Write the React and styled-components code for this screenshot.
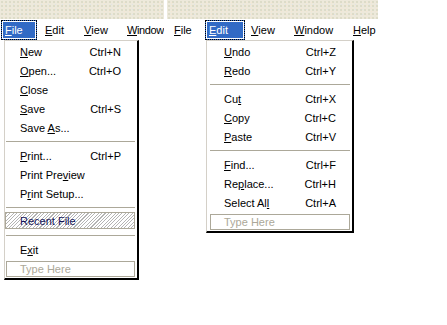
import styled, { createGlobalStyle } from 'styled-components';

const GlobalStyle = createGlobalStyle`
	html, body {
		margin: 0;
		padding: 0;
		background: #ffffff;
	}
	body {
		font-family: 'Liberation Sans', Arial, sans-serif;
		font-size: 11px;
		color: #000000;
	}
`;

const Page = styled.div`
	display: flex;
	gap: 3px;
	width: 447px;
	height: 325px;
	overflow: hidden;
	background: #ffffff;
`;

const Shot = styled.div`
	display: flex;
	flex-direction: column;
	flex: 0 0 auto;
	width: ${(p) => p.width}px;
	overflow: hidden;
`;

// textured XP desktop strip above the form
const Desktop = styled.div`
	height: 19px;
	background-color: #ede9db;
	background-image: radial-gradient(circle, #dcdcc8 0.7px, transparent 1px),
		radial-gradient(circle, #f5e6d2 0.7px, transparent 1px),
		radial-gradient(circle, #e0e4e6 0.6px, transparent 1px);
	background-size: 4px 4px, 5px 3px, 7px 5px;
	background-position: 0 0, 2px 1px, 3px 2px;
`;

const MenuBar = styled.div`
	display: flex;
	height: 21px;
	padding: 1px 0 0 1px;
	box-sizing: border-box;
	background: #ffffff;
	white-space: nowrap;
`;

const BarSlot = styled.div`
	flex: 0 0 auto;
	width: ${(p) => p.width}px;
	display: flex;
`;

const BarLabel = styled.div`
	display: flex;
	align-items: center;
	box-sizing: border-box;
	height: 20px;
	padding-left: ${(p) => (p.active ? 3 : p.pad)}px;
	width: ${(p) => (p.active ? `${p.boxWidth}px` : 'auto')};
	letter-spacing: ${(p) => (p.tight ? '-0.4px' : 'normal')};
	border: ${(p) => (p.active ? '1px dotted #000000' : 'none')};
	box-shadow: ${(p) => (p.active ? 'inset 0 0 0 1px #ffffff' : 'none')};
	background: ${(p) => (p.active ? '#316ac5' : 'transparent')};
	color: ${(p) => (p.active ? '#ffffff' : '#000000')};
`;

const Dropdown = styled.div`
	margin-left: ${(p) => p.offset}px;
	width: ${(p) => p.width}px;
	box-sizing: border-box;
	padding-top: 1px;
	background: #ffffff;
	border-top: 1px solid #d4d0c8;
	border-left: 1px solid #d4d0c8;
	border-right: 2px solid #000000;
	border-bottom: 2px solid #000000;
`;

const Item = styled.div`
	display: flex;
	align-items: center;
	justify-content: space-between;
	height: 19px;
	padding: 0 16px 0 ${(p) => p.indent}px;
	white-space: nowrap;
`;

const Shortcut = styled.span`
	text-align: right;
`;

const Separator = styled.div`
	height: 9px;
	display: flex;
	align-items: center;
	padding: 0 2px 0 ${(p) => p.inset}px;

	&::after {
		content: '';
		flex: 1;
		height: 1px;
		background: #aca899;
	}
`;

const SlotRow = styled.div`
	height: 19px;
	box-sizing: border-box;
	padding: ${(p) => p.top}px 2px 0 ${(p) => p.inset}px;
`;

const RecentBox = styled.div`
	height: 17px;
	box-sizing: border-box;
	display: flex;
	align-items: center;
	padding-left: ${(p) => p.indent}px;
	border: 1px solid #aca899;
	color: #13135a;
	background: repeating-linear-gradient(
		-45deg,
		#ffffff 0px,
		#ffffff 1.6px,
		#b4b4b4 1.6px,
		#b4b4b4 2.4px
	);
`;

const TypeHereBox = styled.div`
	height: 16px;
	box-sizing: border-box;
	display: flex;
	align-items: center;
	padding-left: ${(p) => p.indent}px;
	border: 1px solid #aca899;
	color: #aca899;
`;

const Key = styled.span`
	text-decoration: underline;
	text-underline-offset: 1px;
`;

// "&" marks the access key letter
const Accel = ({ text }) => {
	const i = text.indexOf('&');
	if (i < 0) return text;
	return (
		<>
			{text.slice(0, i)}
			<Key>{text[i + 1]}</Key>
			{text.slice(i + 2)}
		</>
	);
};

const FILE_MENU = [
	{ label: '&New', key: 'Ctrl+N' },
	{ label: '&Open...', key: 'Ctrl+O' },
	{ label: '&Close' },
	{ label: '&Save', key: 'Ctrl+S' },
	{ label: 'Save &As...' },
	{ sep: true },
	{ label: '&Print...', key: 'Ctrl+P' },
	{ label: 'Print Pre&view' },
	{ label: 'P&rint Setup...' },
	{ sep: true },
	{ recent: true, label: 'Recent File' },
	{ sep: true },
	{ label: 'E&xit' },
	{ typeHere: true },
];

const EDIT_MENU = [
	{ label: '&Undo', key: 'Ctrl+Z' },
	{ label: '&Redo', key: 'Ctrl+Y' },
	{ sep: true },
	{ label: 'Cu&t', key: 'Ctrl+X' },
	{ label: '&Copy', key: 'Ctrl+C' },
	{ label: '&Paste', key: 'Ctrl+V' },
	{ sep: true },
	{ label: '&Find...', key: 'Ctrl+F' },
	{ label: 'Re&place...', key: 'Ctrl+H' },
	{ label: 'Select Al&l', key: 'Ctrl+A' },
	{ typeHere: true },
];

const Menu = ({ items, offset, width, indent, inset }) => (
	<Dropdown offset={offset} width={width}>
		{items.map((item, index) => {
			if (item.sep) return <Separator key={index} inset={inset} />;
			if (item.recent)
				return (
					<SlotRow key={index} top={0} inset={inset - 1}>
						<RecentBox indent={indent - inset}>{item.label}</RecentBox>
					</SlotRow>
				);
			if (item.typeHere)
				return (
					<SlotRow key={index} top={2} inset={inset}>
						<TypeHereBox indent={indent - inset - 1}>Type Here</TypeHereBox>
					</SlotRow>
				);
			return (
				<Item key={index} indent={indent}>
					<span>
						<Accel text={item.label} />
					</span>
					{item.key && <Shortcut>{item.key}</Shortcut>}
				</Item>
			);
		})}
	</Dropdown>
);

// slots: [label, slot width, text padding, tight]
const Bar = ({ slots, active, boxWidth }) => (
	<MenuBar>
		{slots.map(([label, width, pad = 4, tight = false]) => (
			<BarSlot key={label} width={width}>
				<BarLabel
					active={label === active}
					boxWidth={boxWidth}
					pad={pad}
					tight={tight}
				>
					<Accel text={`&${label}`} />
				</BarLabel>
			</BarSlot>
		))}
	</MenuBar>
);

export default function App() {
	return (
		<>
			<GlobalStyle />
			<Page>
				<Shot width={164}>
					<Desktop />
					<Bar
						active="File"
						boxWidth={36}
						slots={[
							['File', 40],
							['Edit', 39],
							['View', 43],
							['Window', 40, 4, true],
						]}
					/>
					<Menu items={FILE_MENU} offset={4} width={135} indent={15} inset={1} />
				</Shot>
				<Shot width={211}>
					<Desktop />
					<Bar
						active="Edit"
						boxWidth={40}
						slots={[
							['File', 37, 6],
							['Edit', 42],
							['View', 43],
							['Window', 59],
							['Help', 29],
						]}
					/>
					<Menu items={EDIT_MENU} offset={39} width={148} indent={17} inset={3} />
				</Shot>
			</Page>
		</>
	);
}
